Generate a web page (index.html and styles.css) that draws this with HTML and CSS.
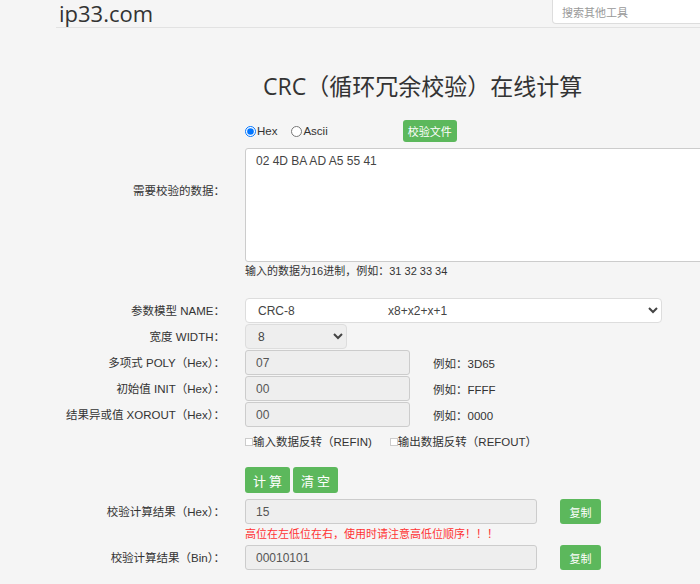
FILE: index.html
```html
<!DOCTYPE html>
<html lang="zh-CN">
<head>
    <meta charset="UTF-8">
    <meta name="viewport" content="width=device-width, initial-scale=1.0">
    <title>CRC（循环冗余校验）在线计算</title>
    <link rel="stylesheet" href="styles.css">
</head>
<body>
    <div class="header">
        <a class="logo" href="#">ip33.com</a>
        <input type="text" class="search" placeholder="搜索其他工具">
    </div>

    <h1 class="title">CRC（循环冗余校验）在线计算</h1>

    <div class="form">
        <div class="row row-data">
            <label class="lbl">需要校验的数据：</label>
            <div class="ctl">
                <div class="mode">
                    <label class="radio"><input type="radio" name="mode" checked>Hex</label>
                    <label class="radio"><input type="radio" name="mode">Ascii</label>
                    <button class="btn btn-file">校验文件</button>
                </div>
                <textarea class="data">02 4D BA AD A5 55 41</textarea>
            </div>
        </div>
        <div class="row">
            <div class="lbl"></div>
            <div class="ctl hint">输入的数据为16进制，例如：31 32 33 34</div>
        </div>

        <div class="row row-name">
            <label class="lbl">参数模型 NAME：</label>
            <div class="ctl">
                <select class="sel sel-name">
                    <option>CRC-8&nbsp;&nbsp;&nbsp;&nbsp;&nbsp;&nbsp;&nbsp;&nbsp;&nbsp;&nbsp;&nbsp;&nbsp;&nbsp;&nbsp;&nbsp;&nbsp;&nbsp;&nbsp;&nbsp;&nbsp;&nbsp;&nbsp;&nbsp;&nbsp;&nbsp;&nbsp;&nbsp;&nbsp;x8+x2+x+1</option>
                </select>
            </div>
        </div>
        <div class="row">
            <label class="lbl">宽度 WIDTH：</label>
            <div class="ctl">
                <select class="sel sel-width"><option>8</option></select>
            </div>
        </div>
        <div class="row">
            <label class="lbl">多项式 POLY（Hex）：</label>
            <div class="ctl">
                <input type="text" class="field field-short" value="07" readonly>
                <span class="example">例如：3D65</span>
            </div>
        </div>
        <div class="row">
            <label class="lbl">初始值 INIT（Hex）：</label>
            <div class="ctl">
                <input type="text" class="field field-short" value="00" readonly>
                <span class="example">例如：FFFF</span>
            </div>
        </div>
        <div class="row">
            <label class="lbl">结果异或值 XOROUT（Hex）：</label>
            <div class="ctl">
                <input type="text" class="field field-short" value="00" readonly>
                <span class="example">例如：0000</span>
            </div>
        </div>
        <div class="row row-check">
            <div class="lbl"></div>
            <div class="ctl">
                <label class="check"><input type="checkbox">输入数据反转（REFIN)</label>
                <label class="check"><input type="checkbox">输出数据反转（REFOUT）</label>
            </div>
        </div>

        <div class="row row-actions">
            <div class="lbl"></div>
            <div class="ctl">
                <button class="btn btn-big">计算</button>
                <button class="btn btn-big">清空</button>
            </div>
        </div>
        <div class="row">
            <label class="lbl">校验计算结果（Hex）：</label>
            <div class="ctl">
                <input type="text" class="field field-result" value="15" readonly>
                <button class="btn btn-copy">复制</button>
            </div>
        </div>
        <div class="row">
            <div class="lbl"></div>
            <div class="ctl warn">高位在左低位在右，使用时请注意高低位顺序！！！</div>
        </div>
        <div class="row">
            <label class="lbl">校验计算结果（Bin）：</label>
            <div class="ctl">
                <input type="text" class="field field-result" value="00010101" readonly>
                <button class="btn btn-copy">复制</button>
            </div>
        </div>
    </div>
</body>
</html>
```

FILE: styles.css
```css
body {
    margin: 0;
    background-color: #f5f5f5;
    color: #333;
    font-family: "Liberation Sans", "Noto Sans CJK SC", sans-serif;
    font-size: 12px;
    overflow: hidden;
}
.header {
    display: flex;
    align-items: flex-start;
    justify-content: space-between;
    margin-left: 56px;
    height: 27px;
    border-bottom: 1px solid #e2e2e2;
}
.logo {
    font-family: "Open Sans", "Noto Sans", sans-serif;
    font-size: 22px;
    line-height: 24px;
    padding-top: 1px;
    color: #333;
    text-decoration: none;
    margin-left: 3px;
}
.search {
    width: 160px;
    height: 24px;
    box-sizing: border-box;
    margin-right: -12px;
    padding: 0 9px;
    border: 1px solid #ddd;
    border-top: none;
    border-radius: 0 0 4px 4px;
    background: #fff;
    font-family: "Noto Sans CJK SC", sans-serif;
    font-size: 11px;
}
.search::placeholder {
    color: #999;
}
.title {
    font-family: "Open Sans", "Noto Sans CJK SC", sans-serif;
    font-weight: normal;
    font-size: 23px;
    line-height: 30px;
    margin: 43px 0 19px 263px;
    color: #333;
}
.lbl, .example, .check, .radio {
    font-size: 11.5px;
}
.hint, .warn {
    font-size: 11px;
}
.row {
    display: flex;
    align-items: center;
    margin-bottom: 1px;
}
.lbl {
    width: 245px;
    box-sizing: border-box;
    flex-shrink: 0;
    padding-right: 20px;
    text-align: right;
    color: #333;
    line-height: 16px;
}
.ctl {
    display: flex;
    align-items: center;
    flex: 1;
}
.row-data .ctl {
    flex-direction: column;
    align-items: flex-start;
}
.mode {
    display: flex;
    align-items: center;
    height: 22px;
    margin-bottom: 6px;
}
.radio {
    display: flex;
    align-items: center;
    margin-right: 14px;
    color: #333;
}
.radio input {
    width: 11px;
    height: 11px;
    margin: 0 1px 0 0;
}
.btn {
    border: none;
    border-radius: 3px;
    background-color: #5cb85c;
    color: #fff;
    cursor: pointer;
    font-family: "Liberation Sans", "Noto Sans CJK SC", sans-serif;
    font-size: 11px;
    padding: 0;
}
.btn-file {
    width: 54px;
    height: 22px;
    margin-left: 61px;
}
.data {
    width: 470px;
    height: 114px;
    box-sizing: border-box;
    padding: 5px 10px;
    border: 1px solid #ccc;
    border-radius: 3px;
    background: #fff;
    color: #444;
    font-family: "Liberation Sans", sans-serif;
    font-size: 12px;
    resize: none;
}
.hint {
    color: #333;
    line-height: 16px;
}
.row-name {
    margin-top: 19px;
}
.sel {
    height: 25px;
    box-sizing: border-box;
    padding: 0 8px;
    border: 1px solid #ddd;
    border-radius: 4px;
    color: #444;
    font-family: "Liberation Sans", sans-serif;
    font-size: 12px;
}
.sel-name {
    width: 417px;
    background: #fff;
}
.sel-width {
    width: 102px;
    background: #eee;
}
.field {
    height: 25px;
    box-sizing: border-box;
    padding: 0 10px;
    border: 1px solid #ccc;
    border-radius: 3px;
    background: #eee;
    color: #555;
    font-family: "Liberation Sans", sans-serif;
    font-size: 12px;
}
.field-short {
    width: 165px;
}
.example {
    margin-left: 23px;
    color: #333;
}
.row-check {
    margin-top: 7px;
}
.check {
    display: flex;
    align-items: center;
    margin-right: 18px;
    line-height: 16px;
    color: #333;
}
.check input {
    appearance: none;
    width: 8px;
    height: 8px;
    margin: 0;
    border: 1px solid #ccc;
    background: #fff;
}
.row-actions {
    margin-top: 17px;
    margin-bottom: 6px;
}
.btn-big {
    height: 26px;
    width: 45px;
    margin-right: 3px;
    font-size: 13px;
    letter-spacing: 3px;
    text-indent: 3px;
}
.field-result {
    width: 292px;
}
.btn-copy {
    width: 41px;
    height: 25px;
    margin-left: 23px;
}
.warn {
    color: #ff3333;
    line-height: 18px;
    margin-bottom: 1px;
}
```
